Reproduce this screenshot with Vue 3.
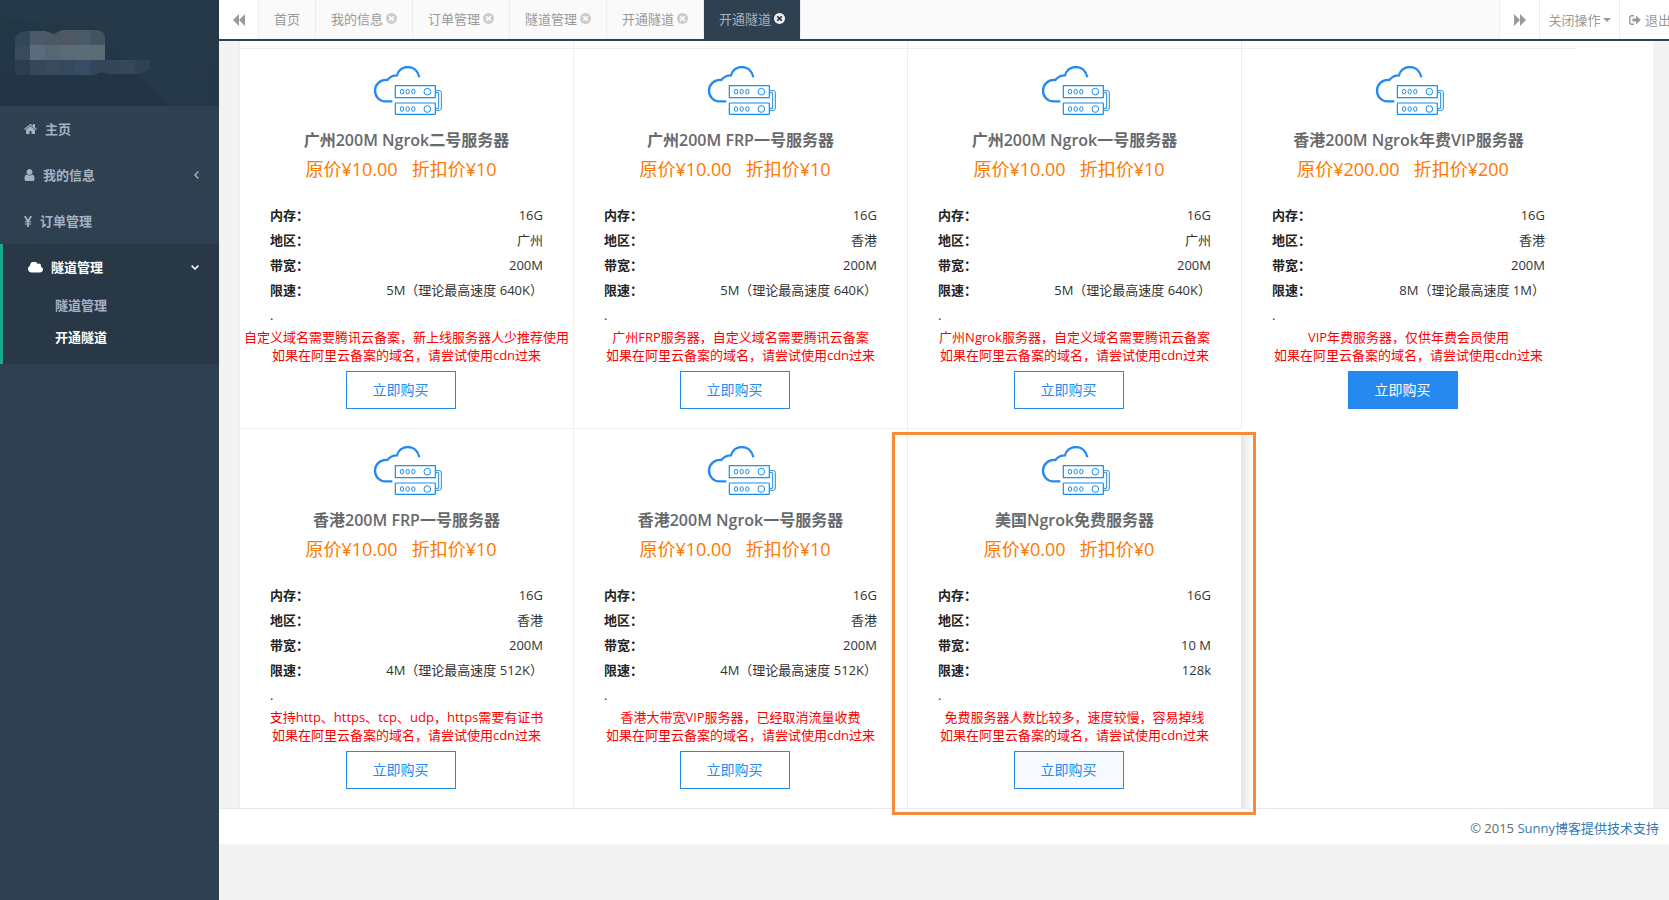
<script setup>
import { ref } from 'vue'

const timesCircle =
  'M1277 1122q0-26-19-45l-181-181 181-181q19-19 19-45 0-27-19-46l-90-90q-19-19-46-19-26 0-45 19l-181 181-181-181q-19-19-45-19-27 0-46 19l-90 90q-19 19-19 46 0 26 19 45l181 181-181 181q-19 19-19 45 0 27 19 46l90 90q19 19 46 19 26 0 45-19l181-181 181 181q19 19 45 19 27 0 46-19l90-90q19-19 19-46zm387-226q0 209-103 385.5t-279.5 279.5-385.5 103-385.5-103-279.5-279.5-103-385.5 103-385.5 279.5-279.5 385.5-103 385.5 103 279.5 279.5 103 385.5z'

const tabs = ['首页', '我的信息', '订单管理', '隧道管理', '开通隧道', '开通隧道']
const activeTab = ref(5)

const cdnNote = '如果在阿里云备案的域名，请尝试使用cdn过来'

function server(name, price, sale, region, band, limit, note, extra = {}) {
  return {
    name,
    price,
    sale,
    note,
    specs: [
      ['内存：', '16G'],
      ['地区：', region],
      ['带宽：', band],
      ['限速：', limit],
    ],
    ...extra,
  }
}

const servers = [
  server('广州200M Ngrok二号服务器', '10.00', '10', '广州', '200M', '5M（理论最高速度 640K）', '自定义域名需要腾讯云备案，新上线服务器人少推荐使用'),
  server('广州200M FRP一号服务器', '10.00', '10', '香港', '200M', '5M（理论最高速度 640K）', '广州FRP服务器，自定义域名需要腾讯云备案'),
  server('广州200M Ngrok一号服务器', '10.00', '10', '广州', '200M', '5M（理论最高速度 640K）', '广州Ngrok服务器，自定义域名需要腾讯云备案'),
  server('香港200M Ngrok年费VIP服务器', '200.00', '200', '香港', '200M', '8M（理论最高速度 1M）', 'VIP年费服务器，仅供年费会员使用', { solid: true }),
  server('香港200M FRP一号服务器', '10.00', '10', '香港', '200M', '4M（理论最高速度 512K）', '支持http、https、tcp、udp，https需要有证书'),
  server('香港200M Ngrok一号服务器', '10.00', '10', '香港', '200M', '4M（理论最高速度 512K）', '香港大带宽VIP服务器，已经取消流量收费'),
  server('美国Ngrok免费服务器', '0.00', '0', '', '10 M', '128k', '免费服务器人数比较多，速度较慢，容易掉线', { marked: true }),
]

const mosaic = [
  ['#33475a', '#4a5a69', '#4b5966', '#4f5664', '#495a69', '#44545f', '#374854'],
  ['#384a5d', '#5c6b7c', '#566771', '#5a6b78', '#596c77', '#5a6c74', '#41525f', '#223344', '#243645'],
  ['#2b3e51', '#35485b', '#384b5f', '#36495c', '#364e65', '#344659', '#34475a', '#35485a', '#304354', '#34475a'],
]
</script>

<template>
  <div class="app">
    <aside class="sidebar">
      <header class="profile">
        <svg class="facets" viewBox="0 0 219 106" preserveAspectRatio="none" aria-hidden="true">
          <rect width="219" height="106" fill="#243746" />
          <path d="M118 0H219V106H170L138 74L98 27Z" fill="#263948" />
          <path d="M118 0L98 27L0 18V0Z" fill="#263948" />
          <path d="M138 74L170 106H0V70Z" fill="#233544" />
          <path d="M219 0V106H202Z" fill="#253847" />
        </svg>
        <svg class="avatar" viewBox="0 0 150 45" aria-hidden="true">
          <defs>
            <clipPath id="blob">
              <path d="M0 8Q4 1 12 1H30L39 4L47 0H82Q90 1 90 8V30H135V38Q128 44 118 44H92Q86 40 80 45H0Z" />
            </clipPath>
          </defs>
          <g clip-path="url(#blob)">
            <template v-for="(row, r) in mosaic" :key="r">
              <rect v-for="(c, i) in row" :key="i" :x="i * 15" :y="r * 15" width="15" height="15" :fill="c" />
            </template>
          </g>
        </svg>
      </header>
      <nav>
        <a class="item" href="#home">
          <svg width="13" height="14" viewBox="64 128 1664 1536" fill="currentColor" aria-hidden="true"><path d="M1472 992v480q0 26-19 45t-45 19h-384v-384h-256v384h-384q-26 0-45-19t-19-45v-480q0-1 .5-3t.5-3l575-474 575 474q1 2 1 6zm223-69l-62 74q-8 9-21 11h-3q-13 0-21-7l-692-577-692 577q-12 8-24 7-13-2-21-11l-62-74q-8-10-7-23.5t11-21.5l719-599q32-26 76-26t76 26l244 204v-195q0-14 9-23t23-9h192q14 0 23 9t9 23v408l219 182q10 8 11 21.5t-7 23.5z" /></svg>
          <span>主页</span>
        </a>
        <a class="item" href="#profile">
          <svg width="11" height="12" viewBox="256 128 1280 1536" fill="currentColor" aria-hidden="true"><path d="M1536 1399q0 109-62.5 187t-150.5 78h-854q-88 0-150.5-78t-62.5-187q0-85 8.5-160.5t31.5-152 58.5-131 94-89 134.5-34.5q131 128 313 128t313-128q76 0 134.5 34.5t94 89 58.5 131 31.5 152 8.5 160.5zm-256-887q0 159-112.5 271.5t-271.5 112.5-271.5-112.5-112.5-271.5 112.5-271.5 271.5-112.5 271.5 112.5 112.5 271.5z" /></svg>
          <span>我的信息</span>
          <svg class="caret" width="5" height="8" viewBox="0 0 5 8" fill="none" stroke="currentColor" stroke-width="1.4" aria-hidden="true"><path d="M4.4 .6L1 4L4.4 7.4" /></svg>
        </a>
        <a class="item" href="#orders">
          <svg width="8" height="11" viewBox="0 0 8 11" fill="none" stroke="currentColor" aria-hidden="true"><path d="M.8 0L4 5.5L7.2 0M4 5V11" stroke-width="1.8" /><path d="M.8 5.8H7.2M.8 8H7.2" stroke-width="1.1" /></svg>
          <span>订单管理</span>
        </a>
        <div class="group">
          <a class="item" href="#tunnels">
            <svg width="15" height="11" viewBox="64 256 1920 1280" fill="currentColor" aria-hidden="true"><path d="M1984 1152q0 159-112.5 271.5t-271.5 112.5h-1088q-185 0-316.5-131.5t-131.5-316.5q0-132 71-241.5t187-163.5q-2-28-2-43 0-212 150-362t362-150q158 0 286.5 88t187.5 230q70-62 166-62 106 0 181 75t75 181q0 75-41 138 129 30 213 134.5t84 239.5z" /></svg>
            <span>隧道管理</span>
            <svg class="caret" width="8" height="5" viewBox="0 0 8 5" fill="none" stroke="currentColor" stroke-width="1.5" aria-hidden="true"><path d="M.6 .6L4 4L7.4 .6" /></svg>
          </a>
          <a class="sub" href="#list">隧道管理</a>
          <a class="sub on" href="#open">开通隧道</a>
        </div>
      </nav>
    </aside>

    <div class="main">
      <div class="topbar">
        <button class="tool" type="button" aria-label="向左">
          <svg width="12" height="12" viewBox="0 0 12 12" fill="currentColor" aria-hidden="true"><path d="M6 0V12L0 6ZM12 0V12L6 6Z" /></svg>
        </button>
        <nav class="tabs">
          <a v-for="(t, i) in tabs" :key="i" href="#tab" class="tab" :class="{ active: i === activeTab }" @click.prevent="activeTab = i">
            <span>{{ t }}</span>
            <svg v-if="i" width="11" height="11" viewBox="128 128 1536 1536" fill="currentColor" aria-hidden="true"><path :d="timesCircle" /></svg>
          </a>
        </nav>
        <button class="tool right" type="button" aria-label="向右">
          <svg width="12" height="12" viewBox="0 0 12 12" fill="currentColor" aria-hidden="true"><path d="M0 0V12L6 6ZM6 0V12L12 6Z" /></svg>
        </button>
        <button class="tool right close" type="button">
          关闭操作<svg width="8" height="4" viewBox="0 0 8 4" fill="currentColor" aria-hidden="true"><path d="M0 0H8L4 4Z" /></svg>
        </button>
        <a class="tool right exit" href="#logout">
          <svg width="12" height="10" viewBox="0 0 12 10" aria-hidden="true"><path d="M5 .8H2.6Q.8 .8 .8 2.6V7.4Q.8 9.2 2.6 9.2H5" fill="none" stroke="currentColor" stroke-width="1.4" /><path d="M3.4 3.4H7V.6L11.8 5L7 9.4V6.6H3.4Z" fill="currentColor" /></svg>
          <span>退出</span>
        </a>
      </div>

      <main class="panel">
        <div class="grid">
          <div v-for="n in 4" :key="n" class="stub"></div>
          <article v-for="s in servers" :key="s.name" class="card" :class="{ marked: s.marked, last: s.solid }">
            <svg class="cloud" width="70" height="49" viewBox="36 32 210 147" fill="none" stroke="#1a8ce6" stroke-width="3.6" aria-hidden="true">
              <path d="M178 66C174 46 160 35 143 35C127 35 114 46 111 60C98 60 89 65 82 74C60 72 45 88 45 106C45 124 58 138 76 138H97" stroke="#2489f0" stroke-width="7" />
              <rect x="106" y="91" width="120" height="36" />
              <rect x="106" y="143" width="120" height="34" rx="2" />
              <g stroke-width="3">
                <ellipse cx="126" cy="109" rx="5" ry="7" /><ellipse cx="143" cy="109" rx="5" ry="7" /><ellipse cx="160" cy="109" rx="5" ry="7" />
                <circle cx="202" cy="109" r="10" />
                <ellipse cx="126" cy="161" rx="5" ry="7" /><ellipse cx="143" cy="161" rx="5" ry="7" /><ellipse cx="160" cy="161" rx="5" ry="7" />
                <circle cx="202" cy="161" r="10" />
                <path d="M227 106H238Q244 106 244 112V158Q244 165 238 165H227M227 112H236V159H227" />
              </g>
            </svg>
            <h3>{{ s.name }}</h3>
            <p class="price"><span>原价¥{{ s.price }}</span><span>折扣价¥{{ s.sale }}</span></p>
            <dl>
              <div v-for="[k, v] in s.specs" :key="k"><dt>{{ k }}</dt><dd>{{ v }}</dd></div>
            </dl>
            <p class="dot">.</p>
            <p class="note">{{ s.note }}<br />{{ cdnNote }}</p>
            <button class="buy" :class="{ solid: s.solid }" type="button">立即购买</button>
          </article>
        </div>
      </main>

      <footer class="footer">© 2015 <a href="#blog">Sunny博客提供技术支持</a></footer>
    </div>
  </div>
</template>

<style>
body {
  background: #f3f3f4;
}
</style>

<style scoped>
.app {
  display: flex;
  min-height: 100vh;
  background: #f3f3f3;
  color: #676a6c;
  font: 13px/18px 'Open Sans', 'Noto Sans CJK SC', sans-serif;
}
.app * {
  box-sizing: border-box;
}
a {
  color: inherit;
  text-decoration: none;
}
button {
  font: inherit;
  cursor: pointer;
}
p,
h3,
dl,
dd {
  margin: 0;
}

.sidebar {
  flex: 0 0 219px;
  background: #2f4050;
  color: #a7b1c2;
  font-weight: 600;
}
.profile {
  position: relative;
  height: 106px;
  padding: 30px 15px;
}
.facets {
  position: absolute;
  inset: 0;
  width: 100%;
  height: 100%;
}
.avatar {
  position: relative;
  display: block;
  width: 150px;
  height: 45px;
}
.item {
  display: flex;
  align-items: center;
  gap: 8px;
  height: 46px;
  padding: 0 20px 0 24px;
}
.caret {
  margin-left: auto;
}
.group {
  height: 120px;
  border-left: 3px solid #19aa8d;
  background: #293846;
}
.group .item {
  padding-left: 25px;
  color: #fff;
}
.sub {
  display: block;
  height: 32px;
  padding-left: 52px;
  line-height: 30px;
}
.sub.on {
  color: #fff;
}

.main {
  flex: 1;
  min-width: 0;
}
.topbar {
  display: flex;
  height: 41px;
  overflow: hidden;
  border-bottom: 2px solid #2f4050;
  background: #fafafa;
  color: #999;
}
.tool {
  display: flex;
  flex: 0 0 40px;
  align-items: center;
  justify-content: center;
  min-width: 0;
  padding: 0;
  border: 0;
  border-right: 1px solid #eee;
  background: #fff;
  color: #999;
}
.tool.right {
  border-right: 0;
  border-left: 1px solid #eee;
}
.tool.close {
  flex-basis: 80px;
  gap: 2px;
}
.tool.exit {
  flex-basis: 50px;
  justify-content: flex-start;
  gap: 4px;
  padding-left: 9px;
  white-space: nowrap;
}
.exit svg,
.exit span {
  flex: none;
}
.tabs {
  display: flex;
  flex: 1;
  min-width: 0;
  overflow: hidden;
}
.tab {
  display: flex;
  flex: none;
  align-items: center;
  gap: 3px;
  padding: 0 15px 2px;
  border-right: 1px solid #eee;
}
.tab svg {
  color: #ccc;
}
.tab.active {
  background: #2f4050;
  color: #a7b1c2;
}
.tab.active svg {
  color: #eee;
}

.panel {
  margin: 0 16px 0 20px;
  padding-right: 77px;
  border-left: 1px solid #eee;
  background: #fff;
}
.grid {
  display: grid;
  grid-template-columns: repeat(4, 1fr);
}
.stub {
  height: 8px;
  border-right: 1px solid #eee;
  border-bottom: 1px solid #eee;
}
.stub:nth-child(4) {
  border-right: 0;
}
.card {
  position: relative;
  display: flex;
  flex-direction: column;
  align-items: center;
  padding: 17px 0 19px;
  border-right: 1px solid #eee;
  border-bottom: 1px solid #eee;
  color: #333;
}
.card:nth-child(n + 9) {
  border-bottom: 0;
}
.card.last {
  border-color: transparent;
}
.cloud {
  flex: none;
}
h3 {
  margin-top: 13px;
  color: #676a6c;
  font-size: 16px;
  font-weight: 600;
  line-height: 24px;
}
.price {
  display: flex;
  gap: 14px;
  margin-top: 3px;
  padding-right: 11px;
  color: #ff7800;
  font-size: 18px;
  line-height: 28px;
}
dl {
  align-self: stretch;
  margin-top: 20px;
  padding: 0 30px;
}
dl div {
  display: flex;
  justify-content: space-between;
  height: 25px;
  line-height: 24px;
}
dt {
  color: #222;
  font-weight: 600;
}
.dot {
  align-self: stretch;
  padding-left: 30px;
  line-height: 25px;
}
.note {
  color: #f00;
  text-align: center;
  white-space: nowrap;
}
.buy {
  width: 110px;
  height: 38px;
  margin: 7px 12px 0 0;
  border: 1px solid #2589ef;
  background: #fff;
  color: #2589ef;
  font-size: 14px;
}
.buy.solid {
  background: #2589ef;
  color: #fff;
}
.marked {
  border-right-color: transparent;
}
.marked .buy {
  background: #f6fafe;
}
.marked::before {
  content: '';
  position: absolute;
  top: 5px;
  bottom: 0;
  left: 100%;
  width: 12px;
  background: linear-gradient(90deg, #e4e4e4, #fff);
}
.marked::after {
  content: '';
  position: absolute;
  z-index: 2;
  inset: 3px -15px -7px -16px;
  border: 3px solid #f98a38;
  pointer-events: none;
}

.footer {
  height: 36px;
  padding: 10px 10px 0;
  border-top: 1px solid #e7eaec;
  background: #fff;
  text-align: right;
}
.footer a {
  color: #337ab7;
}
</style>
